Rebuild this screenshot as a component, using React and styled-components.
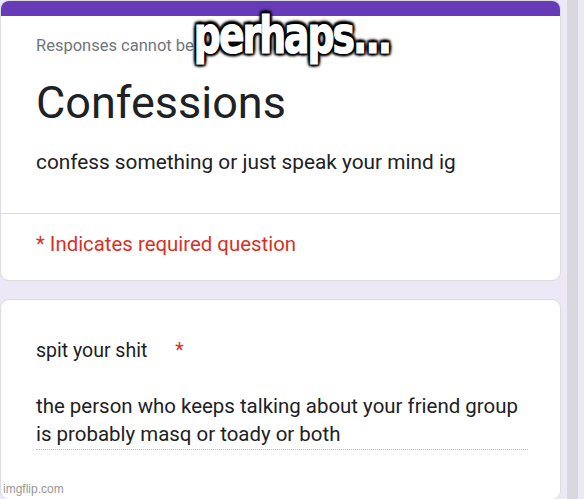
import React from 'react';
import styled, { createGlobalStyle } from 'styled-components';

const GlobalStyle = createGlobalStyle`
  html, body {
    margin: 0;
    padding: 0;
    background: #ede8f6;
    overflow: hidden;
  }
  body {
    font-family: Roboto, 'Liberation Sans', Arial, sans-serif;
  }
`;

const Page = styled.div`
  position: relative;
  display: flex;
  width: 584px;
  height: 499px;
  overflow: hidden;
  background: #ede8f6;
`;

const Main = styled.div`
  display: flex;
  flex-direction: column;
  gap: 18px;
  width: 561px;
`;

const Gutter = styled.div`
  width: 6px;
`;

const Scrollbar = styled.div`
  width: 11px;
  background: #d9d8de;
`;

const Card = styled.div`
  background: #fff;
  border: 1px solid #dadce0;
  border-radius: 9px;
  overflow: hidden;
  flex-shrink: 0;
`;

const PurpleBar = styled.div`
  height: 15px;
  background: #673ab7;
`;

const Intro = styled.div`
  padding: 20px 24px 37px 35px;
`;

const Notice = styled.div`
  font-size: 16.5px;
  line-height: 20px;
  color: #70757a;
`;

const Title = styled.h1`
  margin: 21px 0 0;
  font-size: 45px;
  line-height: 52px;
  font-weight: 400;
  color: #202124;
`;

const Description = styled.div`
  margin-top: 19px;
  font-size: 20.8px;
  line-height: 28px;
  color: #202124;
`;

const Divider = styled.div`
  height: 1px;
  background: #dadce0;
`;

const Required = styled.div`
  padding: 17px 35px 23px;
  font-size: 20.4px;
  line-height: 26px;
  color: #d93025;
`;

const Question = styled.div`
  padding: 37px 34px 49px 35px;
`;

const QuestionTitle = styled.div`
  font-size: 19.5px;
  line-height: 28px;
  color: #202124;
`;

const Star = styled.span`
  color: #d93025;
  margin-left: 28px;
`;

const Answer = styled.div`
  margin-top: 27px;
  width: 492px;
  font-size: 20.45px;
  line-height: 28.3px;
  color: #202124;
  border-bottom: 1px dotted #b5b8bd;
`;

const Caption = styled.div`
  position: absolute;
  top: 9px;
  left: 0;
  right: 0;
  text-align: center;
  font-family: 'DejaVu Sans Condensed', 'DejaVu Sans', sans-serif;
  font-weight: 700;
  font-size: 42px;
  line-height: 44px;
  letter-spacing: -2px;
  color: #fff;
  -webkit-text-stroke: 1px #fff;
  transform: scaleY(1.22);
  transform-origin: center top;
  text-shadow:
    2px 2px 2px #000, -2px -2px 2px #000, 2px -2px 2px #000, -2px 2px 2px #000,
    0 2px 3px #000, 0 -2px 3px #000, 2px 0 3px #000, -2px 0 3px #000;
`;

const Watermark = styled.div`
  position: absolute;
  left: 3px;
  bottom: 3px;
  font-family: 'Liberation Sans', Arial, sans-serif;
  font-size: 12px;
  color: rgba(120, 120, 120, 0.8);
`;

export default function App() {
  return (
    <>
      <GlobalStyle />
      <Page>
        <Main>
          <Card>
            <PurpleBar />
            <Intro>
              <Notice>Responses cannot be edited</Notice>
              <Title>Confessions</Title>
              <Description>confess something or just speak your mind ig</Description>
            </Intro>
            <Divider />
            <Required>* Indicates required question</Required>
          </Card>
          <Card>
            <Question>
              <QuestionTitle>
                spit your shit<Star>*</Star>
              </QuestionTitle>
              <Answer>
                the person who keeps talking about your friend group is probably masq or toady or both
              </Answer>
            </Question>
          </Card>
        </Main>
        <Gutter />
        <Scrollbar />
        <Caption>perhaps...</Caption>
        <Watermark>imgflip.com</Watermark>
      </Page>
    </>
  );
}
